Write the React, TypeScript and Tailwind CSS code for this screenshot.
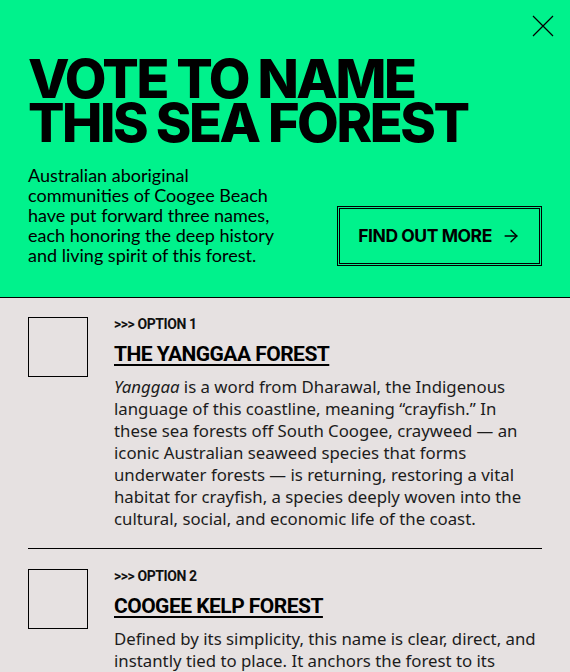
import { ArrowRight } from "lucide-react";

type Option = {
  label: string;
  title: string;
  body: React.ReactNode;
};

const options: Option[] = [
  {
    label: ">>> OPTION 1",
    title: "THE YANGGAA FOREST",
    body: (
      <>
        <em>Yanggaa</em> is a word from Dharawal, the Indigenous
        <br />
        language of this coastline, meaning “crayfish.” In
        <br />
        these sea forests off South Coogee, crayweed — an
        <br />
        iconic Australian seaweed species that forms
        <br />
        underwater forests — is returning, restoring a vital
        <br />
        habitat for crayfish, a species deeply woven into the
        <br />
        cultural, social, and economic life of the coast.
      </>
    ),
  },
  {
    label: ">>> OPTION 2",
    title: "COOGEE KELP FOREST",
    body: (
      <>
        Defined by its simplicity, this name is clear, direct, and
        <br />
        instantly tied to place. It anchors the forest to its
        <br />
        location and makes it easy to remember, share and find.
      </>
    ),
  },
];

function OptionRow({ option }: { option: Option }) {
  return (
    <div className="flex gap-[26px]">
      <button className="w-[60px] h-[60px] shrink-0 border border-black" aria-label={option.title} />
      <div className="flex-1">
        <p className="-mt-[1px] text-[14px] font-bold leading-4 tracking-[-0.03em] text-[#111] font-['Roboto',sans-serif]">
          {option.label}
        </p>
        <h2 className="mt-[10px] text-[21px] font-bold leading-6 tracking-[-0.025em] underline decoration-2 underline-offset-[3px] font-['Roboto',sans-serif]">
          {option.title}
        </h2>
        <p className="mt-[10px] text-[16.8px] leading-[22px] whitespace-nowrap text-[#1c1c1c] font-['Noto_Sans',sans-serif]">
          {option.body}
        </p>
      </div>
    </div>
  );
}

export default function App() {
  return (
    <div className="w-[570px] h-[672px] overflow-hidden bg-[#e6e1e1] text-black">
      <header className="bg-[#00f28c] border-b border-black px-7 pb-[32px]">
        <div className="flex justify-end pt-[15px] -mr-[12px]">
          <button aria-label="Close">
            <svg width="22" height="22" viewBox="0 0 22 22" stroke="currentColor" strokeWidth="1.2" fill="none">
              <path d="M1 1L21 21M21 1L1 21" />
            </svg>
          </button>
        </div>
        <h1 className="mt-[20px] text-[54px] font-extrabold leading-[44px] tracking-[-0.045em] font-['Inter',sans-serif]">
          VOTE TO NAME
          <br />
          THIS SEA FOREST
        </h1>
        <div className="mt-[20px] flex items-end justify-between">
          <p className="text-[18px] leading-5 whitespace-nowrap font-['Lato',sans-serif]">
            Australian aboriginal
            <br />
            communities of Coogee Beach
            <br />
            have put forward three names,
            <br />
            each honoring the deep history
            <br />
            and living spirit of this forest.
          </p>
          <a
            href="#"
            className="flex items-center gap-[9px] w-[205px] h-[60px] mb-[-1px] justify-center border-[3px] border-double border-black text-[17.5px] font-bold tracking-[-0.025em] font-['Inter',sans-serif]"
          >
            FIND OUT MORE
            <ArrowRight className="w-5 h-5" strokeWidth={1.75} />
          </a>
        </div>
      </header>

      <main className="px-7 pt-[19px]">
        <OptionRow option={options[0]} />
        <div className="mt-[18px] mb-[20px] border-t border-black" />
        <OptionRow option={options[1]} />
      </main>
    </div>
  );
}
